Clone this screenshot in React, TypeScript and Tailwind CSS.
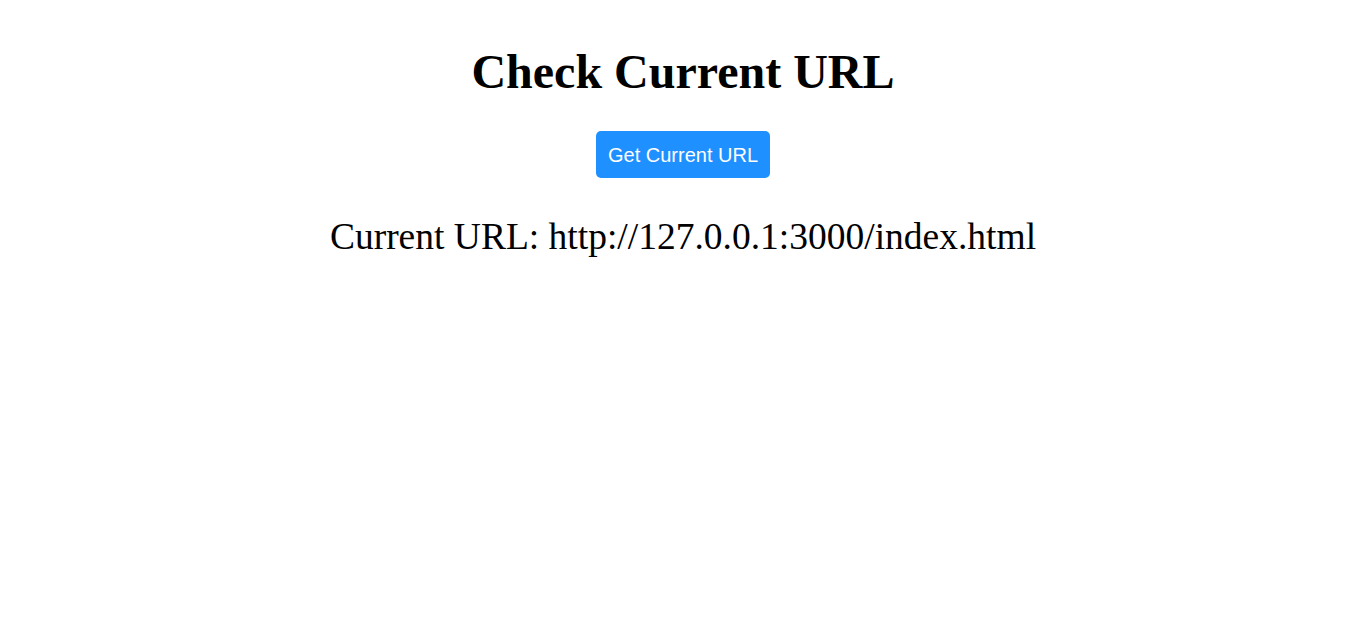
export default function App() {
  return (
    <div className="flex flex-col items-center bg-white min-h-[632px] text-black" style={{ fontFamily: '"Liberation Serif", "Times New Roman", serif' }}>
      <h1 className="text-[48px] font-bold mt-[44px] leading-[1.15]">Check Current URL</h1>
      <button className="mt-[32px] bg-[#1e90ff] text-white rounded-[5px] px-[12px] h-[47px] text-[20px]" style={{ fontFamily: '"Liberation Sans", Arial, sans-serif' }}>
        Get Current URL
      </button>
      <p className="text-[37.5px] mt-[37px] leading-[1.15]">Current URL: http://127.0.0.1:3000/index.html</p>
    </div>
  );
}
